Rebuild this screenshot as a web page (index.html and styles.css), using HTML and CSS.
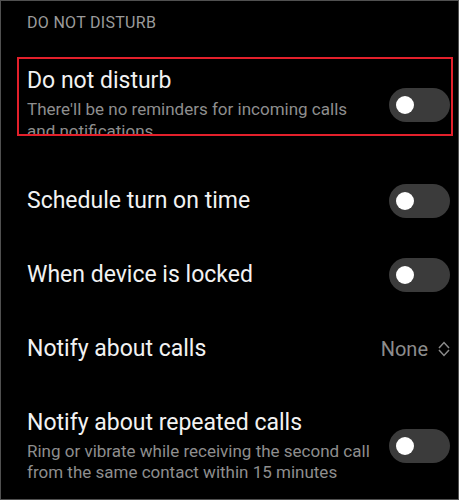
FILE: index.html
```html
<!DOCTYPE html>
<html lang="en">
<head>
    <meta charset="UTF-8">
    <meta name="viewport" content="width=device-width, initial-scale=1.0">
    <title>Do not disturb</title>
    <link rel="stylesheet" href="styles.css">
</head>
<body>
    <div class="screen">
        <div class="section-title">DO NOT DISTURB</div>

        <div class="highlight">
            <div class="row detail">
                <div class="text">
                    <div class="title">Do not disturb</div>
                    <div class="summary">There'll be no reminders for incoming calls and notifications</div>
                </div>
                <div class="toggle"><span class="knob"></span></div>
            </div>
        </div>

        <div class="list">
            <div class="row simple">
                <div class="title">Schedule turn on time</div>
                <div class="toggle"><span class="knob"></span></div>
            </div>
            <div class="row simple">
                <div class="title">When device is locked</div>
                <div class="toggle"><span class="knob"></span></div>
            </div>
            <div class="row simple">
                <div class="title">Notify about calls</div>
                <div class="value">
                    None
                    <svg class="chevrons" width="12" height="16" viewBox="0 0 12 16">
                        <polyline points="1,7 6,1.5 11,7" fill="none" stroke="#8a8a8a" stroke-width="1.5"/>
                        <polyline points="1,9 6,14.5 11,9" fill="none" stroke="#8a8a8a" stroke-width="1.5"/>
                    </svg>
                </div>
            </div>
            <div class="row detail last">
                <div class="text">
                    <div class="title">Notify about repeated calls</div>
                    <div class="summary">Ring or vibrate while receiving the second call from the same contact within 15 minutes</div>
                </div>
                <div class="toggle"><span class="knob"></span></div>
            </div>
        </div>
    </div>
</body>
</html>
```

FILE: styles.css
```css
body {
    margin: 0;
    background-color: #000;
    font-family: Roboto, "Noto Sans", sans-serif;
}
.screen {
    box-sizing: border-box;
    width: 459px;
    height: 500px;
    border: 1px solid #505050;
    padding: 12px 5px 0 16px;
    overflow: hidden;
}
.section-title {
    font-size: 16px;
    line-height: 20px;
    letter-spacing: 0.3px;
    color: #9b9b9b;
    padding-left: 10px;
}
.highlight {
    margin-top: 24px;
    box-sizing: border-box;
    height: 79px;
    border: 2px solid #e3202b;
    overflow: hidden;
}
.row {
    display: flex;
    align-items: center;
    justify-content: space-between;
    padding: 0 3px 0 10px;
}
.highlight .row {
    padding: 8px 1px 6px 8px;
}
.row.simple {
    height: 74px;
}
.row.last {
    padding-top: 23px;
}
.list {
    margin-top: 28px;
}
.text {
    flex: 1;
    padding-right: 12px;
}
.title {
    font-size: 23px;
    line-height: 28px;
    color: #f2f2f2;
}
.summary {
    margin-top: 3px;
    font-size: 17px;
    line-height: 22px;
    color: #8e8e8e;
}
.row.last .summary {
    margin-top: 4px;
    line-height: 21px;
}
.toggle {
    flex-shrink: 0;
    box-sizing: border-box;
    width: 61px;
    height: 34px;
    border-radius: 17px;
    background-color: #3b3b3b;
    display: flex;
    align-items: center;
    padding-left: 7px;
}
.knob {
    width: 18px;
    height: 18px;
    border-radius: 50%;
    background-color: #fff;
}
.value {
    display: flex;
    align-items: center;
    font-size: 20px;
    color: #8c8c8c;
}
.chevrons {
    margin-left: 10px;
}
```
